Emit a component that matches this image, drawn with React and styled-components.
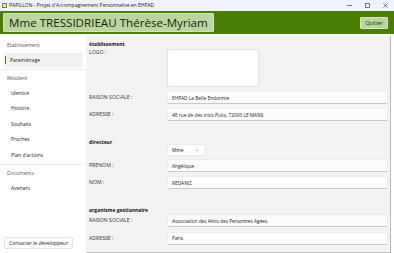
import React from "react";
import styled, { createGlobalStyle } from "styled-components";

const Global = createGlobalStyle`
  html, body { margin: 0; padding: 0; }
  body { font-family: "Open Sans", "Noto Sans", sans-serif; background: #ffffff; }
  #root { width: 394px; height: 253px; overflow: hidden; }
  * { box-sizing: border-box; }
`;

const Window = styled.div`
  width: 394px;
  height: 253px;
  display: flex;
  flex-direction: column;
  background: #ffffff;
`;

const TitleBar = styled.div`
  height: 11px;
  flex: none;
  display: flex;
  align-items: center;
  background: #eff3f9;
  padding-left: 2px;
  font-size: 5px;
  line-height: 7px;
  color: #222;
  gap: 2px;
`;

const AppIcon = styled.div`
  width: 5px;
  height: 5px;
  border: 1px solid #6a8f3a;
  background: #dbe9c8;
`;

const TitleText = styled.span`
  flex: 1;
  white-space: nowrap;
`;

const WinControls = styled.div`
  display: flex;
  align-items: center;
  height: 100%;
`;

const WinBtn = styled.div`
  width: 18px;
  height: 11px;
  display: flex;
  align-items: center;
  justify-content: center;
`;

const Header = styled.div`
  height: 23px;
  flex: none;
  background: #4a7d04;
  display: flex;
  align-items: center;
  justify-content: space-between;
  padding: 0 6px 0 3px;
`;

const NameBox = styled.div`
  height: 19px;
  padding: 0 5px;
  display: flex;
  align-items: center;
  background: #b9d79c;
  border: 1px solid #d0e5bb;
  border-radius: 1px;
  font-size: 11.6px;
  color: #1b1b1b;
  white-space: nowrap;
`;

const QuitButton = styled.div`
  height: 12px;
  padding: 0 4px;
  display: flex;
  align-items: center;
  background: #b9d79c;
  border: 1px solid #d7e9c6;
  border-radius: 1px;
  font-size: 5.3px;
  color: #1b1b1b;
`;

const Body = styled.div`
  flex: 1;
  display: flex;
  min-height: 0;
  padding-top: 2px;
`;

const Sidebar = styled.div`
  width: 85px;
  flex: none;
  display: flex;
  flex-direction: column;
  background: #ffffff;
  padding: 1.5px 2px 4px 4px;
`;

const SectionLabel = styled.div`
  font-size: 5px;
  line-height: 7px;
  color: #555;
  height: 15px;
  display: flex;
  align-items: center;
  padding-left: 3px;
`;

const NavItem = styled.div`
  position: relative;
  height: 14px;
  margin: 0.75px 0;
  display: flex;
  align-items: center;
  padding-left: ${(p) => (p.$active ? "6px" : "7px")};
  font-size: 5px;
  line-height: 7px;
  color: #222;
  background: ${(p) => (p.$active ? "#f1f1f1" : "transparent")};
  border-radius: 2px;
  &::before {
    content: "";
    display: ${(p) => (p.$active ? "block" : "none")};
    position: absolute;
    left: 1px;
    top: 3px;
    width: 1px;
    height: 8px;
    background: #4a7d04;
  }
`;

const Separator = styled.div`
  height: 1px;
  background: #eeeeee;
  margin: 1px -2px 0.5px -4px;
`;

const Spacer = styled.div`
  flex: 1;
`;

const ContactButton = styled.div`
  align-self: flex-start;
  height: 12px;
  padding: 0 4px;
  display: flex;
  align-items: center;
  font-size: 5px;
  color: #222;
  border: 1px solid #e3e3e3;
  border-radius: 2px;
  background: #fdfdfd;
`;

const Content = styled.div`
  flex: 1;
  background: #f3f3f3;
  border-right: 1px solid #b8b8b8;
  border-bottom: 1px solid #b8b8b8;
  margin-right: 3px;
  margin-left: 1px;
  display: flex;
  flex-direction: column;
  padding: 5px 2px 0 3px;
  overflow: hidden;
`;

const GroupTitle = styled.div`
  font-size: 5px;
  font-weight: 700;
  line-height: 7px;
  height: 7px;
  color: #111;
  margin-top: ${(p) => p.$mt || 0}px;
`;

const Row = styled.div`
  display: grid;
  grid-template-columns: 78px 1fr;
  align-items: ${(p) => (p.$top ? "start" : "center")};
  margin-top: ${(p) => p.$mt ?? 4}px;
`;

const Label = styled.div`
  font-size: 5.2px;
  line-height: 7px;
  color: #333;
`;

const Input = styled.div`
  height: 13px;
  background: #fcfcfc;
  border: 1px solid #ececec;
  border-bottom: 1px solid #c9c9c9;
  border-radius: 2px;
  display: flex;
  align-items: center;
  padding-left: 4px;
  font-size: 4.8px;
  color: #222;
`;

const LogoBox = styled.div`
  width: 92px;
  height: 38px;
  background: #ffffff;
  border: 1px solid #e2e2e2;
  border-radius: 2px;
`;

const Select = styled.div`
  width: 39px;
  height: 12px;
  background: #fcfcfc;
  border: 1px solid #ececec;
  border-radius: 2px;
  display: flex;
  align-items: center;
  justify-content: space-between;
  padding: 0 6px 0 4px;
  font-size: 4.8px;
  color: #222;
`;

const Chevron = () => (
  <svg width="4" height="3" viewBox="0 0 4 3">
    <path d="M0.5 0.8 L2 2.2 L3.5 0.8" fill="none" stroke="#777" strokeWidth="0.5" />
  </svg>
);

export default function App() {
  return (
    <>
      <Global />
      <Window>
        <TitleBar>
          <AppIcon />
          <TitleText>PAPILLON - Projet d'Accompagnement Personnalisé en EHPAD</TitleText>
          <WinControls>
            <WinBtn>
              <svg width="5" height="1" viewBox="0 0 5 1"><rect width="5" height="0.7" fill="#444" /></svg>
            </WinBtn>
            <WinBtn>
              <svg width="5" height="5" viewBox="0 0 5 5"><rect x="0.4" y="0.4" width="4.2" height="4.2" fill="none" stroke="#444" strokeWidth="0.7" /></svg>
            </WinBtn>
            <WinBtn>
              <svg width="5" height="5" viewBox="0 0 5 5"><path d="M0.4 0.4 L4.6 4.6 M4.6 0.4 L0.4 4.6" stroke="#444" strokeWidth="0.7" /></svg>
            </WinBtn>
          </WinControls>
        </TitleBar>
        <Header>
          <NameBox>Mme TRESSIDRIEAU Thérèse-Myriam</NameBox>
          <QuitButton>Quitter</QuitButton>
        </Header>
        <Body>
          <Sidebar>
            <SectionLabel>Etablissement</SectionLabel>
            <NavItem $active>Paramétrage</NavItem>
            <Separator />
            <SectionLabel>Résident</SectionLabel>
            <NavItem>Identité</NavItem>
            <NavItem>Histoire</NavItem>
            <NavItem>Souhaits</NavItem>
            <NavItem>Proches</NavItem>
            <NavItem>Plan d'actions</NavItem>
            <Separator />
            <SectionLabel>Documents</SectionLabel>
            <NavItem>Avenant</NavItem>
            <Spacer />
            <ContactButton>Contacter le développeur</ContactButton>
          </Sidebar>
          <Content>
            <GroupTitle>établissement</GroupTitle>
            <Row $top $mt={1}>
              <Label>LOGO :</Label>
              <LogoBox />
            </Row>
            <Row $mt={4}>
              <Label>RAISON SOCIALE :</Label>
              <Input>EHPAD La Belle Endormie</Input>
            </Row>
            <Row $mt={4}>
              <Label>ADRESSE :</Label>
              <Input>48 rue de des trois Puits, 72000 LE MANS</Input>
            </Row>
            <GroupTitle $mt={18}>directeur</GroupTitle>
            <Row $mt={-2}>
              <Label />
              <Select>Mme <Chevron /></Select>
            </Row>
            <Row $mt={3}>
              <Label>PRENOM :</Label>
              <Input>Angélique</Input>
            </Row>
            <Row $mt={4}>
              <Label>NOM :</Label>
              <Input>REDANIZ</Input>
            </Row>
            <GroupTitle $mt={18}>organisme gestionnaire</GroupTitle>
            <Row $mt={0}>
              <Label>RAISON SOCIALE :</Label>
              <Input>Association des Amis des Personnes Agées</Input>
            </Row>
            <Row $mt={4.5}>
              <Label>ADRESSE :</Label>
              <Input>Paris</Input>
            </Row>
          </Content>
        </Body>
      </Window>
    </>
  );
}
